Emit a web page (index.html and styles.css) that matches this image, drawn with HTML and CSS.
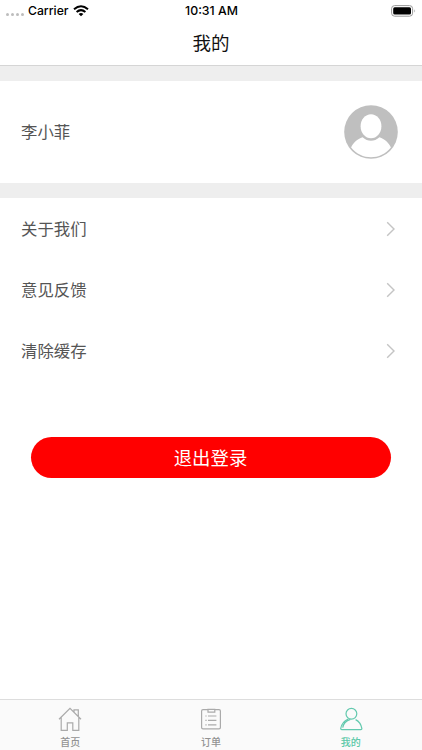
FILE: index.html
```html
<!DOCTYPE html>
<html lang="zh-CN">
<head>
<meta charset="utf-8">
<title>我的</title>
<link rel="stylesheet" href="styles.css">
</head>
<body>
<div class="app">
  <div class="status">
    <div class="carrier">
      <span class="dots"><i></i><i></i><i></i><i></i></span>
      <span class="carrier-name">Carrier</span>
      <svg class="wifi" width="16" height="12" viewBox="0 0 16 12"><g fill="none" stroke="#000" stroke-width="2"><path d="M1 4.3Q8-1.8 15 4.3"/><path d="M3.6 7Q8 3.2 12.4 7"/></g><path d="M5.6 8.9Q8 7.1 10.4 8.9L8 11.3Z"/></svg>
    </div>
    <span class="time">10:31 AM</span>
    <svg class="battery" width="26" height="12" viewBox="0 0 26 12"><rect x=".6" y=".6" width="21" height="10.6" rx="3" fill="none" stroke="#999" stroke-width="1"/><rect x="2.2" y="2.2" width="17.8" height="7.4" rx="1.5"/><path d="M23.4 4.2Q25 5.9 23.4 7.6Z" fill="#999"/></svg>
  </div>
  <header class="title">我的</header>
  <main>
    <section class="profile">
      <span>李小菲</span>
      <svg width="54" height="54" viewBox="0 0 54 54"><circle cx="27" cy="27" r="26.8" fill="#bfbfbf"/><ellipse cx="27" cy="21.2" rx="10.4" ry="12" fill="#fff"/><path d="M7.1 42.6C9 37.4 13.3 34.3 18.6 32.2C23.7 37 30.3 37 35.4 32.2C40.7 34.3 45 37.4 46.9 42.6C36.5 55.6 17.5 55.6 7.1 42.6Z" fill="#fff"/></svg>
    </section>
    <nav class="menu">
      <div class="row"><span>关于我们</span><svg width="10" height="16" viewBox="0 0 10 16"><path d="M1.2 1.3L8 8L1.2 14.7"/></svg></div>
      <div class="row"><span>意见反馈</span><svg width="10" height="16" viewBox="0 0 10 16"><path d="M1.2 1.3L8 8L1.2 14.7"/></svg></div>
      <div class="row"><span>清除缓存</span><svg width="10" height="16" viewBox="0 0 10 16"><path d="M1.2 1.3L8 8L1.2 14.7"/></svg></div>
    </nav>
    <button class="logout">退出登录</button>
  </main>
  <footer class="tabs">
    <div class="tab">
      <svg width="26" height="26" viewBox="0 0 26 26"><path d="M2 13.2L13 2.3L24 13.2M4.2 11.2V24.3H10.3V16.8H15.8V24.3H21.8V11.2M17 6V3.8H21.3V10"/></svg>
      <span>首页</span>
    </div>
    <div class="tab">
      <svg width="26" height="26" viewBox="0 0 26 26"><path d="M10 3.6H5Q3.6 3.6 3.6 5V21.4Q3.6 22.8 5 22.8H21Q22.4 22.8 22.4 21.4V5Q22.4 3.6 21 3.6H16.8M10 3.3H16.8V6.1H10ZM10 10H18.4M10 14.4H18.4M10 18.8H18.4M7.4 10H8.6M7.4 14.4H8.6M7.4 18.8H8.6"/></svg>
      <span>订单</span>
    </div>
    <div class="tab active">
      <svg width="26" height="26" viewBox="0 0 26 26"><circle cx="13.4" cy="7.8" r="5.4"/><path d="M10.2 13C5.8 14.8 3.4 18.5 2.7 22.6Q2.7 23.6 3.7 23.6H22.9Q23.9 23.6 23.9 22.6C23.2 18.8 21.2 15.4 17.6 13.6M12.4 13.4C8 14.8 5.3 18 4.7 21.7"/></svg>
      <span>我的</span>
    </div>
  </footer>
</div>
</body>
</html>
```
FILE: styles.css
```css
* { box-sizing: border-box; }
body {
  margin: 0;
  background: #fff;
  font-family: "Noto Sans CJK SC", sans-serif;
  color: #555;
}
.app { height: 750px; display: flex; flex-direction: column; }
.status {
  height: 20px;
  display: grid;
  grid-template-columns: 1fr auto 1fr;
  align-items: center;
  padding: 0 5px 0 6px;
  color: #000;
  font: 500 12.3px/20px Inter, sans-serif;
}
.carrier { display: flex; align-items: center; }
.dots { display: flex; gap: 2px; padding-top: 8px; margin-right: 4px; }
.dots i { width: 3px; height: 3px; border-radius: 50%; background: #bdbdbd; }
.carrier-name { font-size: 12.2px; letter-spacing: 0; padding-top: 1px; }
.wifi { margin-left: 4px; }
.time { padding-top: 1px; }
.battery { justify-self: end; }
.title {
  height: 46px;
  border-bottom: 1px solid #d5d5d5;
  color: #111;
  font-size: 18.5px;
  line-height: 44px;
  text-align: center;
}
main { flex: 1; display: flex; flex-direction: column; }
.profile {
  height: 132px;
  display: flex;
  align-items: center;
  justify-content: space-between;
  padding: 0 24px 0 21px;
  border-top: 15px solid #eee;
  border-bottom: 15px solid #eee;
  font-size: 16.4px;
}
.profile span, .row span { padding-bottom: 2px; }
.menu { font-size: 16.4px; }
.row {
  height: 61px;
  display: flex;
  align-items: center;
  justify-content: space-between;
  padding: 0 26px 0 21px;
}
.row path { fill: none; stroke: #c4c4c4; stroke-width: 1.4; }
.logout {
  height: 41px;
  margin: 56px 31px 0;
  padding: 0 1px 0 0;
  border: 0;
  border-radius: 21px;
  background: #f00;
  color: #fff;
  font: 400 18.4px/41px "Noto Sans CJK SC", sans-serif;
}
.tabs {
  height: 51px;
  display: grid;
  grid-template-columns: repeat(3, 1fr);
  border-top: 1px solid #ddd;
  background: #fafafa;
}
.tab {
  display: flex;
  flex-direction: column;
  align-items: center;
  padding-top: 6px;
  color: #929292;
  font-size: 10px;
  font-weight: 500;
  line-height: 20px;
}
.tab path, .tab circle { fill: none; stroke: #aaa; stroke-width: 1.2; }
.tab.active { color: #5bc8a8; padding-right: 2px; }
.active path, .active circle { stroke: #63c9ae; }
```
